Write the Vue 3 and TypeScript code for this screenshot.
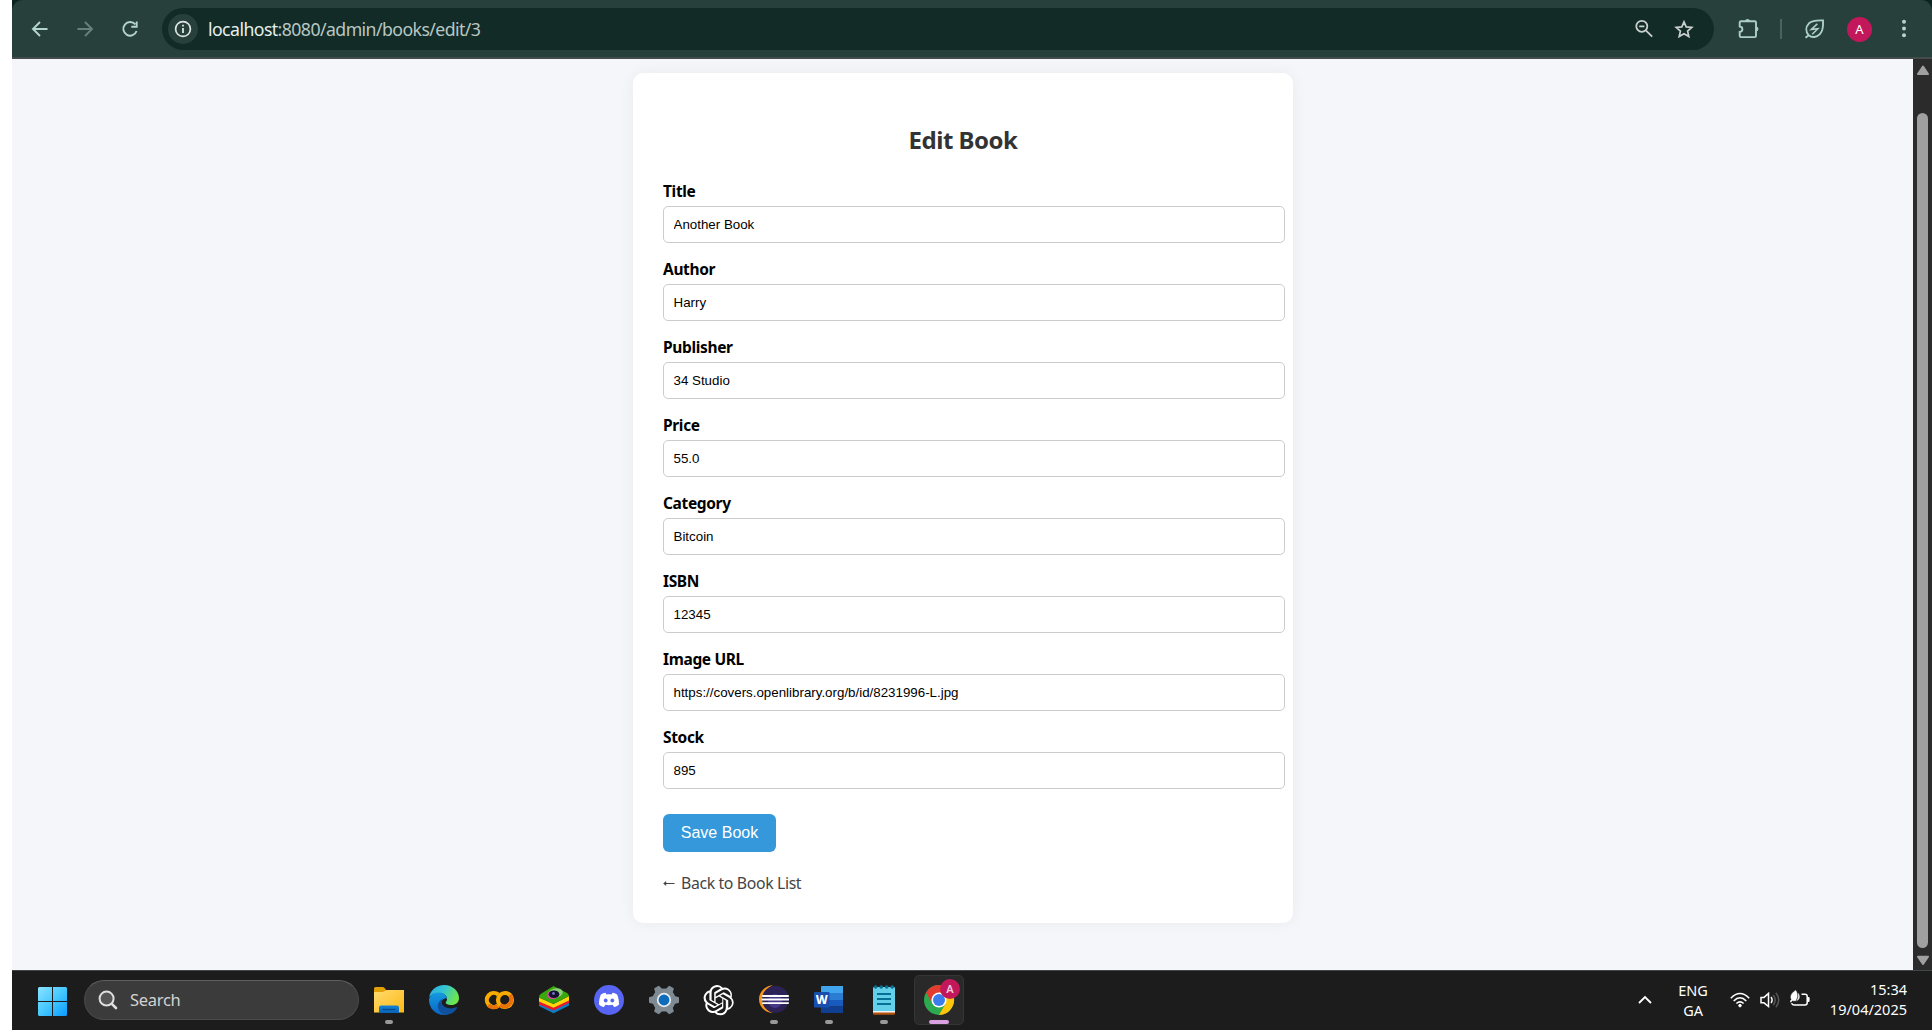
<script setup lang="ts">
import { ref } from 'vue'

interface Field {
  id: string
  label: string
  value: string
}

const fields = ref<Field[]>([
  { id: 'title', label: 'Title', value: 'Another Book' },
  { id: 'author', label: 'Author', value: 'Harry' },
  { id: 'publisher', label: 'Publisher', value: '34 Studio' },
  { id: 'price', label: 'Price', value: '55.0' },
  { id: 'category', label: 'Category', value: 'Bitcoin' },
  { id: 'isbn', label: 'ISBN', value: '12345' },
  { id: 'image', label: 'Image URL', value: 'https://covers.openlibrary.org/b/id/8231996-L.jpg' },
  { id: 'stock', label: 'Stock', value: '895' },
])
const teeth: number[] = [0, 60, 120, 180, 240, 300]
</script>

<template>
  <div class="screen">
    <header class="toolbar-wrap">
      <div class="toolbar">
        <svg class="nav back" width="24" height="24" viewBox="0 0 24 24"><path d="M19.500 12H5.500M12 5 5 12l7 7" /></svg>
        <svg class="nav fwd" width="24" height="24" viewBox="0 0 24 24"><path d="M4.500 12h14M12 5l7 7-7 7" /></svg>
        <svg class="nav reload" width="24" height="24" viewBox="0 0 24 24"><path d="M17.300 7.400A6.800 6.800 0 1 0 18.600 14M18.700 4.500v5.300h-5.400" /></svg>
        <div class="omnibox">
          <span class="info">
            <svg width="18" height="18" viewBox="0 0 18 18"><circle cx="9" cy="9" r="7.400" fill="none" stroke="#dfe7e5" stroke-width="1.700" /><path d="M9 8v5M9 4.800v1.800" stroke="#dfe7e5" stroke-width="1.800" /></svg>
          </span>
          <span class="url"><b>localhost</b>:8080/admin/books/edit/3</span>
          <svg class="zoomout" width="20" height="20" viewBox="0 0 20 20" fill="none" stroke="#c9cfcd" stroke-width="1.800"><circle cx="7.800" cy="7.300" r="5.500" /><path d="m11.800 11.300 6.400 6.400M5.200 7.300h5.200" /></svg>
          <svg class="star" width="20" height="20" viewBox="0 0 20 20" fill="none" stroke="#c9cfcd" stroke-width="1.700"><path d="m10 2.800 2.200 5.100 5.600.5-4.200 3.700 1.200 5.500L10 14.700l-4.800 2.900 1.200-5.500-4.200-3.700 5.600-.5z" /></svg>
        </div>
        <svg class="puzzle" width="24" height="24" viewBox="0 0 24 24"><path d="M4 4.200h13.700c.9 0 1.300.5 1.300 1.300v13.300c0 .8-.5 1.300-1.300 1.300H4c-.8 0-1.300-.5-1.300-1.300v-3.900c3.600-.4 3.600-5 0-5.400V5.500c0-.8.5-1.300 1.300-1.300z" fill="none" stroke="#acd0c8" stroke-width="1.900" /><path d="M8.200 4.200c0-3 4.600-3 4.600 0zM19 9.400c3.200 0 3.200 5 0 5z" fill="#acd0c8" /></svg>
        <i class="divider"></i>
        <svg class="leaf" width="22" height="22" viewBox="0 0 22 22" fill="none" stroke="#acd0c8" stroke-width="1.900"><path d="M4.700 17.300C1.500 13.500 1.600 8.700 5 5.300 8.200 2.400 12.500 2.100 19 2.400c.4 6.300-.1 10.700-3.100 13.700-3.200 3.300-7.800 4-11.200 1.200zM1.500 19.800l3.200-2.500" /><path d="m13.300 5.800-6 5.600 6.500-.6-5.600 5.500" stroke-width="1.600" /></svg>
        <span class="avatar">A</span>
        <svg class="dots" width="6" height="20" viewBox="0 0 6 20" fill="#b7d2cb"><circle cx="3" cy="2.700" r="2" /><circle cx="3" cy="9.500" r="2" /><circle cx="3" cy="16.300" r="2" /></svg>
      </div>
    </header>

    <div class="viewport">
      <main class="page">
        <section class="card">
          <h2>Edit Book</h2>
          <form @submit.prevent>
            <div v-for="f in fields" :key="f.id" class="field">
              <label :for="f.id">{{ f.label }}</label>
              <input :id="f.id" v-model="f.value" type="text" />
            </div>
            <button type="submit">Save Book</button>
          </form>
          <a class="backlink"><svg width="12" height="8" viewBox="0 0 12 8"><path d="M11.500 4.500H1.200M3.200 2.800 1.100 4.500l2.100 1.700" fill="none" stroke="#444" stroke-width="1.100" /></svg><span>Back to Book List</span></a>
        </section>
      </main>
      <aside class="scrollbar">
        <svg width="14" height="11" viewBox="0 0 14 11"><path d="M7 1.500 12 9H2z" fill="#a0a0a0" stroke="#a0a0a0" stroke-width="2" stroke-linejoin="round" /></svg>
        <i class="thumb"></i>
        <svg width="14" height="11" viewBox="0 0 14 11"><path d="M7 9 12 1.700H2z" fill="#a0a0a0" stroke="#a0a0a0" stroke-width="2" stroke-linejoin="round" /></svg>
      </aside>
    </div>

    <footer class="taskbar">
      <svg class="start" width="29" height="29" viewBox="0 0 29 29">
        <defs><linearGradient id="win" gradientUnits="userSpaceOnUse" x1="0" y1="0" x2="29" y2="29"><stop offset="0" stop-color="#8be3ff" /><stop offset=".5" stop-color="#46c8ff" /><stop offset="1" stop-color="#0a9bff" /></linearGradient></defs>
        <path d="M1 0h13v14H0V1zM15 0h13l1 1v13H15zM0 15h14v14H1l-1-1zM15 15h14v13l-1 1H15z" fill="url(#win)" />
      </svg>
      <div class="search">
        <svg width="20" height="20" viewBox="0 0 20 20" fill="none" stroke="#dedede" stroke-width="2"><circle cx="8.600" cy="8.600" r="7" fill="#555" /><path d="m13.800 13.800 4.200 4.200" stroke-width="2.600" stroke-linecap="round" /></svg>
        <span>Search</span>
      </div>

      <div class="app">
        <svg width="32" height="32" viewBox="0 0 32 32">
          <defs><linearGradient id="fold" x1="0" y1="0" x2="1" y2="1"><stop offset="0" stop-color="#ffdc70" /><stop offset="1" stop-color="#fdb813" /></linearGradient><linearGradient id="foldb" x1="0" y1="0" x2="0" y2="1"><stop offset="0" stop-color="#0f83d8" /><stop offset="1" stop-color="#0a64b8" /></linearGradient></defs>
          <path d="M1 4.500Q1 3 2.500 3h7q1.200 0 2 1l2 2.500V12H1z" fill="#e3a008" />
          <path d="M1 8h8.500q1 0 2-.7l1.500-1q.7-.3 1.500-.3H31v22.500H1z" fill="url(#fold)" />
          <path d="M6 29v-5.500q0-2 2-2h16q2 0 2 2V29z" fill="url(#foldb)" /><path d="M9.500 25.500h13" stroke="#08498c" stroke-width="1.300" />
        </svg><i class="dot"></i>
      </div>
      <div class="app">
        <svg width="32" height="32" viewBox="0 0 32 32">
          <defs><linearGradient id="edg" x1="0" y1="0" x2="1" y2=".4"><stop offset="0" stop-color="#2aa8e0" /><stop offset=".5" stop-color="#35c5d4" /><stop offset="1" stop-color="#6be650" /></linearGradient><linearGradient id="edb" x1="0" y1="0" x2="0" y2="1"><stop offset="0" stop-color="#149be0" /><stop offset="1" stop-color="#0a65c4" /></linearGradient></defs>
          <path d="M1.200 13C2.300 6 8.500 1 16 1c9 0 15 6.500 15 13 0 4.500-3.400 7-7.500 7-3.700 0-6-1.300-5.800-2.500.5-.9 1.300-1.700 1.300-3.500 0-3.500-3-6-7.500-6C7 9 3 11 1.200 13z" fill="url(#edg)" />
          <path d="M1 16c0-4.500 4.500-7.500 9.500-7.500 4.500 0 8.500 2.500 8.500 6.300-1-1.500-6 .2-6 5.700 0 5 4.500 8.500 9 8.400C20 30.300 18 31 16 31 7.700 31 1 24.300 1 16z" fill="url(#edb)" />
          <path d="M14.800 14.500C11 17 9 20 10 24c1 4 4.500 7 8.500 6.800 4.700-.3 8.500-3 10.600-6.700.4-.8-.1-1.100-.8-.8-5.300 2.700-13.800.4-14.600-4.500-.2-1.600.3-3.100 1.100-4.300z" fill="#10519e" />
        </svg>
      </div>
      <div class="app">
        <svg width="32" height="32" viewBox="0 0 32 32" fill="none" stroke-width="4.200">
          <path d="M15.200 10.500A7 7 0 1 0 15.200 21.500" stroke="#f9ab00" /><path d="M5.300 20.800A7 7 0 0 0 14.600 22" stroke="#e8710a" />
          <circle cx="22" cy="16" r="7" stroke="#f9ab00" /><path d="M17.100 20.900A7 7 0 0 0 26.900 11.100" stroke="#e8710a" />
        </svg>
      </div>
      <div class="app">
        <svg width="32" height="32" viewBox="0 0 32 32">
          <path d="m1 19 14.500 6L31 18v3.500L15.500 29.300 1 22z" fill="#0a7fc7" /><path d="m1 16.500 14.500 7L31 15v4l-15.500 7.500L1 20.500z" fill="#e8192c" />
          <path d="m1 13.500 14.500 6.500L31 12v4.500L15.500 23.700 1 17.500z" fill="#ffd60a" /><path d="m15.500 2 13.500 7q2 1.300 2 3L15.500 20 1 13.500q0-2.500 2-3.800z" fill="#38a80d" />
          <ellipse cx="17.500" cy="9.200" rx="7.500" ry="4.800" fill="#8ccf78" transform="rotate(-12 17 9.500)" /><ellipse cx="14.700" cy="11" rx="6" ry="4" fill="#d84ba5" /><ellipse cx="16" cy="10.200" rx="5.300" ry="3.800" fill="#101030" /><circle cx="15.500" cy="9.500" r="1.400" fill="#7f70c0" />
        </svg>
      </div>
      <div class="app">
        <svg width="32" height="32" viewBox="0 0 32 32">
          <circle cx="16" cy="16" r="15" fill="#5865f2" />
          <path d="M12.500 8.800c-2 .3-3.700 1-4.600 1.700C6.500 13.200 6 17 6 20.500c1.500 1.400 3.200 2.200 5 2.500l1.300-2.200c2.400.6 5 .6 7.400 0L21 23c1.800-.3 3.500-1.100 5-2.500 0-3.500-.5-7.300-1.900-10-1-.7-2.600-1.400-4.600-1.700l-.8 1.600c-1.800-.3-3.600-.3-5.400 0z" fill="#fff" /><circle cx="12.700" cy="16.500" r="1.900" fill="#5865f2" /><circle cx="19.300" cy="16.500" r="1.900" fill="#5865f2" />
        </svg>
      </div>
      <div class="app">
        <svg width="32" height="32" viewBox="0 0 32 32">
          <g fill="#7f8a93"><circle cx="16" cy="16" r="11.600" /><path v-for="a in teeth" :key="a" d="M11.800 6.500 13 1.800q.1-.8.9-.8h4.200q.8 0 .9.800L20.200 6.500z" :transform="`rotate(${a + 30} 16 16)`" /></g>
          <circle cx="16" cy="16" r="6.300" fill="#0f6cbd" stroke="#e9edf0" stroke-width="1.700" />
        </svg>
      </div>
      <div class="app">
        <svg width="32" height="32" viewBox="0 0 24 24" fill="#fff">
          <path d="M21.400 10.100a5.650 5.650 0 0 0-.5-4.640 5.700 5.700 0 0 0-6.140-2.730A5.700 5.700 0 0 0 5.100 4.770a5.650 5.650 0 0 0-3.780 2.740 5.700 5.700 0 0 0 .7 6.680 5.650 5.650 0 0 0 .49 4.640 5.700 5.700 0 0 0 6.140 2.730 5.650 5.650 0 0 0 4.260 1.900 5.700 5.700 0 0 0 5.440-3.960 5.650 5.650 0 0 0 3.780-2.740 5.700 5.700 0 0 0-.73-6.660zm-8.500 11.900a4.200 4.200 0 0 1-2.700-.98l4.620-2.670a.75.75 0 0 0 .38-.66v-6.500l1.920 1.110v5.430a4.230 4.230 0 0 1-4.220 4.270zM3.800 18.080a4.200 4.200 0 0 1-.5-2.830l4.600 2.660a.75.75 0 0 0 .76 0l5.630-3.250v2.240l-4.700 2.700A4.230 4.230 0 0 1 3.800 18.080zM2.600 8.260a4.200 4.200 0 0 1 2.200-1.850v5.330c0 .27.140.52.370.66l5.600 3.230-1.940 1.120-4.680-2.700A4.230 4.230 0 0 1 2.600 8.260zm16 3.720-5.630-3.250 1.950-1.120 4.660 2.700a4.220 4.220 0 0 1-.65 7.620v-5.300a.73.730 0 0 0-.33-.65zm1.940-2.920-4.600-2.680a.75.75 0 0 0-.76 0L9.560 9.640V7.390l4.670-2.700a4.220 4.220 0 0 1 6.310 4.370zM8.400 13.070l-1.950-1.120V6.520a4.220 4.220 0 0 1 6.930-3.240L8.780 5.920a.75.75 0 0 0-.38.66zm1.050-2.280L11.960 9.340l2.510 1.450v2.900l-2.500 1.450-2.510-1.450z" />
        </svg>
      </div>
      <div class="app">
        <svg width="32" height="32" viewBox="0 0 32 32">
          <path d="M15 1.300C6 2 1 8.500 1 15.300S6 28.600 15 29.300C8 26 5 21 5 15.300S8 4.600 15 1.300z" fill="#f7941e" />
          <circle cx="17.500" cy="15.300" r="13.500" fill="#2c2255" /><circle cx="17" cy="17" r="7" fill="#473788" />
          <path d="M4.200 12h26.600M3.700 15.500h27.300M4.200 19.200h26.600" stroke="#fff" stroke-width="1.800" />
        </svg><i class="dot"></i>
      </div>
      <div class="app">
        <svg width="32" height="32" viewBox="0 0 32 32">
          <path d="M8 3q0-1 1-1h21v7H8z" fill="#41a5ee" /><path d="M8 9h22v7H8z" fill="#2b7cd3" /><path d="M8 16h22v6.500H8z" fill="#185abd" /><path d="M8 22.500h22V29H9q-1 0-1-1z" fill="#103f91" />
          <rect x="1" y="8" width="15.500" height="15.500" rx="1.200" fill="#174fae" /><text x="8.700" y="20" text-anchor="middle" font-size="12" font-weight="800" fill="#fff">W</text>
        </svg><i class="dot"></i>
      </div>
      <div class="app">
        <svg width="32" height="32" viewBox="0 0 32 32">
          <path d="M5 26h22v3.500q0 1.200-1.200 1.200H6.200Q5 30.700 5 29.500z" fill="#b5520c" /><path d="M5 26h22v2.500H5z" fill="#f2f2f2" />
          <path d="M5 4q0-1 1-1h20q1 0 1 1v23H5z" fill="#63cfe8" /><path d="M9 10h14M9 15h14M9 20h14" stroke="#086f94" stroke-width="1.900" />
          <g fill="#0b6f90"><circle cx="7.700" cy="3" r="1.800" /><circle cx="13.200" cy="3" r="1.800" /><circle cx="18.700" cy="3" r="1.800" /><circle cx="24.200" cy="3" r="1.800" /></g>
        </svg><i class="dot"></i>
      </div>
      <div class="app active">
        <svg width="32" height="32" viewBox="0 0 32 32">
          <circle cx="16" cy="16" r="15" fill="#2da94f" /><path d="M3 8.500A15 15 0 0 1 29 8.500H16L9.500 19.700z" fill="#e33b2e" /><path d="M29 8.500A15 15 0 0 1 16 31l6.500-11.300L16 8.500z" fill="#fdc60b" />
          <circle cx="16" cy="16" r="7.600" fill="#fff" /><circle cx="16" cy="16" r="6" fill="#3b7ded" />
        </svg>
        <span class="badge">A</span><i class="dot wide"></i>
      </div>

      <div class="tray">
        <svg class="chev" width="16" height="10" viewBox="0 0 16 10"><path d="m2 8 6-6 6 6" fill="none" stroke="#fff" stroke-width="1.800" /></svg>
        <div class="lang"><span>ENG</span><span>GA</span></div>
        <svg class="wifi" width="20" height="16" viewBox="0 0 20 16" fill="none" stroke="#fff" stroke-width="1.600"><path d="M.8 6.200q9.200-9.400 18.400 0M3.700 9q6.300-6.400 12.600 0M6.400 11.500q3.600-3.400 7.200 0" /><circle cx="10" cy="13.600" r="1.300" fill="#fff" stroke-width="1" /></svg>
        <svg class="vol" width="20" height="18" viewBox="0 0 20 18" fill="none" stroke="#fff" stroke-width="1.500"><path d="M1 6.400h3L8.500 2.500v13L4 11.800H1zM11 6q2.200 3 0 6" /><path d="M13.300 4q3.800 5 0 10M15.900 1.700q5.600 7.300 0 14.600" stroke="#555" /></svg>
        <svg class="bat" width="20" height="18" viewBox="0 0 20 18"><path d="M11.500 4.300H15q2.200 0 2.200 2.200v6.300q0 2.200-2.200 2.200H4.500q-2.200 0-3-1.800" fill="none" stroke="#fff" stroke-width="1.500" /><path d="M17.200 7h1.200q1.200 0 1.200 1.200v2.600q0 1.200-1.200 1.200h-1.200z" fill="#fff" /><path d="M5.700.5C7 2 7.500 4.500 7 7.500L5.600 10.800Q3.800 11 2.400 10.400L.8 12.300l-.8-.8 1.500-2C-.5 5.500 2.500 2.300 5.700.5zM8.300 3.400C10 6 9.800 9 6.800 10.600 8.300 8.500 8.600 6 8.300 3.400z" fill="#fff" stroke="#fff" stroke-width=".5" /></svg>
        <div class="clock"><span>15:34</span><span>19/04/2025</span></div>
      </div>
    </footer>
  </div>
</template>

<style>
body { margin: 0; background: #fff; overflow: hidden; }
</style>

<style scoped>
* { box-sizing: border-box; }
.screen { width: 1932px; height: 1030px; padding-left: 12px; display: flex; flex-direction: column; font-family: "Noto Sans", "Open Sans", sans-serif; background: #fff; }
svg { display: block; flex: none; }
.toolbar-wrap { height: 59px; background: #0c2420; flex: none; }
.toolbar { height: 59px; display: flex; align-items: center; padding: 1px 0 0 16px; background: #28403b; border-bottom: 2px solid #434c4a; border-radius: 11px 11px 0 0; }
.nav path { fill: none; stroke: #b4d5cd; stroke-width: 1.9; }
.nav.fwd { margin-left: 21px; }
.nav.fwd path { stroke: #66807a; }
.nav.reload { margin-left: 21px; }
.omnibox { width: 1552px; height: 42px; margin-left: 20px; border-radius: 21px; background: #122b27; display: flex; align-items: center; padding-left: 6px; }
.info { width: 30px; height: 30px; border-radius: 50%; background: #28403b; display: flex; align-items: center; justify-content: center; }
.url { margin-left: 10px; font-size: 17.700px; line-height: 24px; letter-spacing: -.57px; color: #b9c7c3; white-space: nowrap; flex: 1; }
.url b { font-weight: 400; color: #e6efed; }
.zoomout { margin-right: 20px; }
.star { margin-right: 20px; }
.puzzle { margin-left: 23px; }
.divider { width: 2px; height: 20px; margin-left: 19px; background: #49635d; }
.leaf { margin-left: 22px; }
.avatar { width: 25px; height: 25px; margin-left: 21px; border-radius: 50%; background: #c2185b; color: #fff; font-size: 13px; line-height: 25px; text-align: center; }
.dots { margin-left: 29px; }

.viewport { height: 911px; display: flex; flex: none; }
.page { flex: 1; display: flex; justify-content: center; align-items: flex-start; padding-top: 14px; background: #f4f6fa; overflow: hidden; }
.card { width: 660px; height: 850px; margin-left: 1px; padding: 49px 30px 0; border-radius: 10px; background: #fff; box-shadow: 0 0 15px rgba(0, 0, 0, .05); }
h2 { margin: 0 0 23px; font-size: 24px; line-height: 36px; font-weight: 700; letter-spacing: -.5px; color: #333; text-align: center; }
.field { height: 78px; }
label { display: block; height: 25px; font-size: 15.500px; line-height: 20px; font-weight: 700; letter-spacing: -.35px; color: #000; }
.field input { display: block; width: 622px; height: 37px; padding: 10px 10px 10px 9.500px; border: 1px solid #ccc; border-radius: 5px; background: #fff; font: 13.333px "Liberation Sans", Arial, sans-serif; color: #000; outline: none; }
button { display: block; width: 113px; height: 38px; margin-top: 9px; padding: 0; border: 0; border-radius: 6px; background: #3498db; color: #fff; font: 16px/36px "Liberation Sans", Arial, sans-serif; }
.backlink { display: flex; align-items: center; height: 24px; margin-top: 19px; font-size: 15.800px; letter-spacing: -.35px; color: #444; }
.backlink span { margin-left: 6px; }
.scrollbar { width: 19px; background: #2b2b2b; display: flex; flex-direction: column; align-items: center; padding-top: 6px; }
.thumb { width: 11px; height: 835px; margin: 37px 0 7px; border-radius: 6px; background: #a0a0a0; }

.taskbar { height: 60px; flex: none; display: flex; align-items: center; padding-left: 26px; padding-bottom: 1px; background: #1c1c1c; border-top: 1px solid #424846; }
.start { margin-top: 2px; }
.search { width: 275px; height: 40px; margin-left: 17px; margin-right: 5px; border: 1px solid #4a4a4a; border-top-color: #606060; border-radius: 20px; background: #3b3b3b; display: flex; align-items: center; padding-left: 13px; }
.search span { margin-left: 12px; font-size: 16.500px; letter-spacing: -.3px; line-height: 22px; color: #d2d2d2; }
.app { position: relative; width: 50px; height: 50px; margin-right: 5px; flex: none; display: flex; align-items: center; justify-content: center; border-radius: 5px; }
.app.active { background: #292929; border: 1px solid #353535; }
.dot { position: absolute; left: 21px; bottom: 1px; width: 8px; height: 4px; border-radius: 2px; background: #999; }
.dot.wide { left: 14px; bottom: 0; width: 20px; background: #d9a0df; }
.badge { position: absolute; left: 25px; top: 3px; width: 20px; height: 20px; border-radius: 50%; background: #c2185b; color: #f3c9da; font-size: 11px; font-weight: 600; line-height: 20px; text-align: center; }
.tray { flex: 1; display: flex; align-items: center; color: #fff; padding-right: 25px; }
.chev { margin-left: auto; }
.lang { width: 44px; margin-left: 18px; padding-bottom: 1px; display: flex; flex-direction: column; align-items: center; font-size: 14.500px; line-height: 20px; letter-spacing: -.1px; }
.wifi { margin-left: 15px; }
.vol { margin-left: 10px; }
.bat { margin-left: 10px; margin-top: -3px; margin-right: 2px; }
.clock { width: 95px; display: flex; flex-direction: column; align-items: flex-end; font-size: 14.500px; line-height: 20px; letter-spacing: 0; white-space: nowrap; padding-bottom: 2px; }
</style>
